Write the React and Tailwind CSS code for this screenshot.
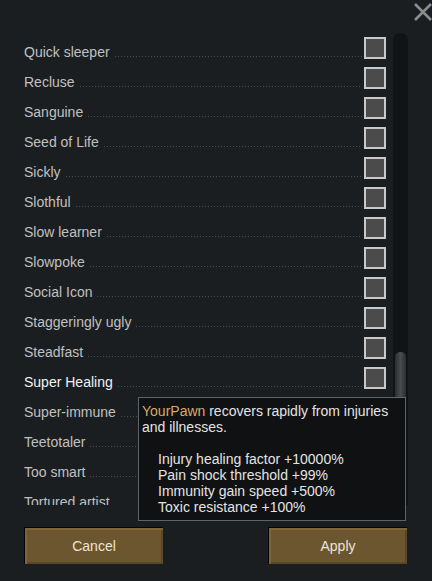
const traits = [
  "Quick sleeper",
  "Recluse",
  "Sanguine",
  "Seed of Life",
  "Sickly",
  "Slothful",
  "Slow learner",
  "Slowpoke",
  "Social Icon",
  "Staggeringly ugly",
  "Steadfast",
  "Super Healing",
  "Super-immune",
  "Teetotaler",
  "Too smart",
  "Tortured artist",
]

function TraitRow({ name, hover }) {
  return (
    <div className="relative h-[30px] shrink-0 flex">
      <div className="flex-1 flex items-end pb-[3px] pr-[2px] min-w-0">
        <span
          className={
            "text-[14px] leading-[16px] whitespace-nowrap " +
            (hover ? "text-[#f2f2f2]" : "text-[#c0c0c0]")
          }
        >
          {name}
        </span>
        <div className="flex-1 h-px mb-[3px] ml-[5px] bg-[linear-gradient(to_right,#4a4d50_1px,transparent_1px)] bg-[length:3px_1px] bg-repeat-x" />
      </div>
      <div className="w-[22px] h-[22px] mt-[4px] border-2 border-[#c9c9c9] bg-[#4b4b4b]" />
    </div>
  )
}

export default function App() {
  return (
    <div
      className="relative w-[432px] h-[581px] bg-[#1b1e21] overflow-hidden"
      style={{ fontFamily: '"Liberation Sans", Arial, sans-serif' }}
    >
      {/* close */}
      <svg className="absolute left-[413px] top-[3px]" width="19" height="18" viewBox="0 0 19 18">
        <path d="M2 1 L18 17 M18 1 L2 17" stroke="#8c8c8c" strokeWidth="2.6" />
      </svg>

      <div className="flex pt-[33px] pl-[24px] h-[505px]">
        <div className="w-[362px] flex flex-col overflow-hidden">
          {traits.map((t) => (
            <TraitRow key={t} name={t} hover={t === "Super Healing"} />
          ))}
        </div>
        {/* scrollbar */}
        <div className="ml-[7px] w-[15px] h-full rounded-t-[7px] bg-[#111315] flex flex-col justify-end items-center">
          <div className="w-[11px] h-[153px] rounded-t-[5px] bg-[linear-gradient(to_right,#2c2d2e,#4a4b4c_50%,#2c2d2e)]" />
        </div>
      </div>

      {/* tooltip */}
      <div className="absolute left-[138px] top-[397px] w-[268px] h-[124px] bg-[#0f1113] border border-[#5d646b] pl-[3px] pr-[4px] pt-[5px] text-[14px] leading-[16px] text-[#e4e4e4]">
        <p>
          <span className="text-[#d9a968]">YourPawn</span> recovers rapidly from injuries and illnesses.
        </p>
        <div className="mt-[16px] pl-[16px]">
          <p>Injury healing factor +10000%</p>
          <p>Pain shock threshold +99%</p>
          <p>Immunity gain speed +500%</p>
          <p>Toxic resistance +100%</p>
        </div>
      </div>

      {/* buttons */}
      <div className="flex justify-between pl-[24px] pr-[25px] mt-[22px]">
        {["Cancel", "Apply"].map((b) => (
          <div
            key={b}
            className="w-[139px] h-[37px] flex items-center justify-center bg-[#6b5630] border-t border-l border-[#050505] shadow-[inset_2px_2px_0_#7d6538,inset_-2px_-2px_0_#5a4727] text-[14px] text-[#ebe4d6]"
          >
            {b}
          </div>
        ))}
      </div>
    </div>
  )
}
